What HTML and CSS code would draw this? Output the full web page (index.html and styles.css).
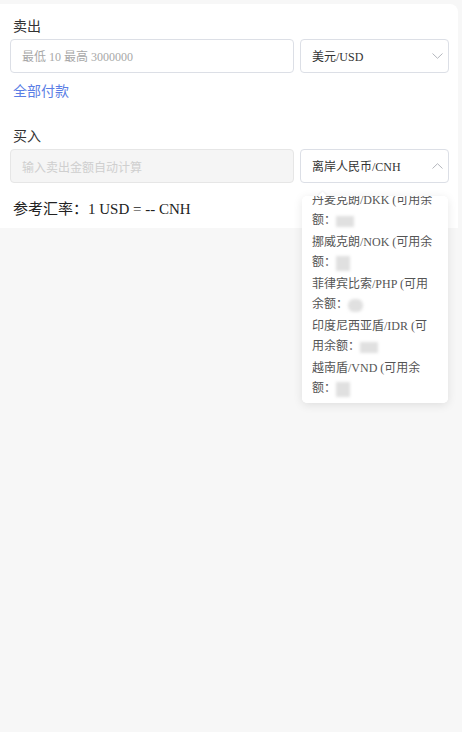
FILE: index.html
```html
<!DOCTYPE html>
<html lang="zh-CN">
<head>
<meta charset="utf-8">
<title>换汇</title>
<link rel="stylesheet" href="styles.css">
</head>
<body>
<div class="card">
  <div class="label">卖出</div>
  <div class="row">
    <div class="input"><span class="ph">最低 10 最高 3000000</span></div>
    <div class="select">
      <span class="val">美元/USD</span>
      <svg class="chev" width="11" height="6" viewBox="0 0 11 6"><path d="M0.5 0.5 L5.5 5.3 L10.5 0.5" fill="none" stroke="#b4b7bd" stroke-width="1"/></svg>
    </div>
  </div>
  <div class="link">全部付款</div>
  <div class="label label2">买入</div>
  <div class="row">
    <div class="input disabled"><span class="ph2">输入卖出金额自动计算</span></div>
    <div class="select">
      <span class="val">离岸人民币/CNH</span>
      <svg class="chev" width="11" height="6" viewBox="0 0 11 6"><path d="M0.5 5.5 L5.5 0.7 L10.5 5.5" fill="none" stroke="#b4b7bd" stroke-width="1"/></svg>
    </div>
  </div>
  <div class="rate">参考汇率：1 USD = -- CNH</div>
</div>

<div class="dropdown">
  <div class="arrow"></div>
  <div class="list">
    <div class="item">丹麦克朗/DKK (可用余<br>额：<span class="blur b1"></span></div>
    <div class="item">挪威克朗/NOK (可用余<br>额：<span class="blur b2"></span></div>
    <div class="item">菲律宾比索/PHP (可用<br>余额：<span class="blur b3"></span></div>
    <div class="item">印度尼西亚盾/IDR (可<br>用余额：<span class="blur b1"></span></div>
    <div class="item">越南盾/VND (可用余<br>额：<span class="blur b2"></span></div>
  </div>
</div>
</body>
</html>
```

FILE: styles.css
```css
html, body {
  margin: 0;
  padding: 0;
  background: #f7f7f7;
  font-family: "Liberation Serif", "Noto Sans CJK SC", serif;
  color: #333;
}

.card {
  margin-top: 4px;
  width: 458px;
  box-sizing: border-box;
  background: #fff;
  border-top-right-radius: 8px;
  padding: 11px 9px 8px 10px;
}

.label {
  font-family: "Noto Sans CJK SC", sans-serif;
  font-size: 14px;
  line-height: 20px;
  margin-bottom: 4px;
  padding-left: 3px;
  color: #333;
}

.label2 {
  margin-top: 25px;
}

.row {
  display: flex;
  gap: 6px;
}

.input {
  width: 284px;
  height: 34px;
  box-sizing: border-box;
  border: 1px solid #dcdfe6;
  border-radius: 4px;
  padding: 0 11px;
  display: flex;
  align-items: center;
}

.input.disabled {
  background: #f5f5f5;
  border-color: #e6e6e6;
}

.ph {
  font-size: 12px;
  color: #a8a8a8;
}

.ph2 {
  font-family: "Noto Sans CJK SC", sans-serif;
  font-size: 12px;
  color: #cfcfcf;
}

.select {
  width: 149px;
  height: 34px;
  box-sizing: border-box;
  border: 1px solid #dcdfe6;
  border-radius: 4px;
  padding: 0 5px 0 11px;
  display: flex;
  align-items: center;
  justify-content: space-between;
}

.val {
  font-size: 12px;
  color: #333;
}

.chev {
  display: block;
}

.link {
  margin-top: 7px;
  padding-left: 3px;
  font-family: "Noto Sans CJK SC", sans-serif;
  font-size: 14px;
  line-height: 20px;
  color: #5b7ee5;
}

.rate {
  margin-top: 15px;
  padding-left: 3px;
  font-size: 15px;
  line-height: 22px;
  color: #222;
}

.dropdown {
  position: absolute;
  left: 302px;
  top: 196px;
  width: 146px;
  height: 207px;
  background: #fff;
  border-radius: 5px;
  box-shadow: 0 2px 10px rgba(0, 0, 0, 0.1);
}

.arrow {
  position: absolute;
  left: 17px;
  top: -3px;
  width: 7px;
  height: 7px;
  background: #fff;
  transform: rotate(45deg);
  box-shadow: -1px -1px 2px rgba(0, 0, 0, 0.05);
}

.list {
  position: relative;
  height: 100%;
  overflow: hidden;
  border-radius: 5px;
  background: #fff;
}

.list .item:first-child {
  margin-top: -7px;
}

.item {
  padding: 1px 10px;
  font-size: 12px;
  line-height: 20px;
  color: #555;
}

.blur {
  display: inline-block;
  vertical-align: middle;
  background: #e0e0e0;
  filter: blur(1.5px);
}

.b1 {
  width: 18px;
  height: 11px;
}

.b2 {
  width: 14px;
  height: 15px;
}

.b3 {
  width: 15px;
  height: 13px;
  border-radius: 6px;
}
```
